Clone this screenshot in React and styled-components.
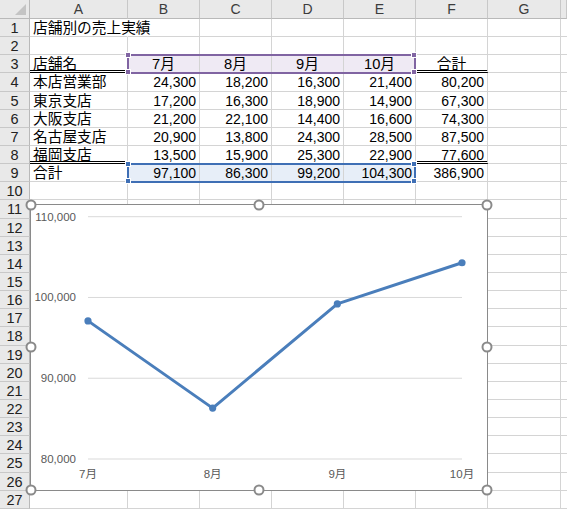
import React from 'react'
import styled, { createGlobalStyle } from 'styled-components'

const GlobalStyle = createGlobalStyle`
  * { box-sizing: border-box; margin: 0; padding: 0; }
  body {
    background: #ffffff;
    font-family: "Liberation Sans", "Noto Sans CJK JP", sans-serif;
    overflow: hidden;
  }
`

const ROW_H = 18.15
const HEAD_H = 19
const COLS = [30, 98, 72, 72, 72, 72, 72, 73, 6]
const LETTERS = ['A', 'B', 'C', 'D', 'E', 'F', 'G', '']

const data = [
  ['本店営業部', 24300, 18200, 16300, 21400, 80200],
  ['東京支店', 17200, 16300, 18900, 14900, 67300],
  ['大阪支店', 21200, 22100, 14400, 16600, 74300],
  ['名古屋支店', 20900, 13800, 24300, 28500, 87500],
  ['福岡支店', 13500, 15900, 25300, 22900, 77600],
]
const totals = ['合計', 97100, 86300, 99200, 104300, 386900]

const fmt = (n) => n.toLocaleString('en-US')

const Sheet = styled.div`
  display: grid;
  width: 567px;
  height: 510px;
  overflow: hidden;
  grid-template-columns: ${COLS.map((c) => c + 'px').join(' ')};
  grid-template-rows: ${HEAD_H}px repeat(27, ${ROW_H}px);
`

const Corner = styled.div`
  grid-row: 1;
  grid-column: 1;
  position: relative;
  background: #e9e9e9;
  border-right: 1px solid #b9b9b9;
  border-bottom: 1px solid #b9b9b9;
  &::after {
    content: '';
    position: absolute;
    right: 3px;
    bottom: 3px;
    border-left: 11px solid transparent;
    border-bottom: 11px solid #c4c4c4;
  }
`

const ColHead = styled.div`
  grid-row: 1;
  grid-column: ${(p) => p.$c};
  background: #e9e9e9;
  border-right: 1px solid #c8c8c8;
  border-bottom: 1px solid #b9b9b9;
  color: #3c3c3c;
  font-size: 14px;
  line-height: 18px;
  text-align: center;
`

const RowHead = styled.div`
  grid-row: ${(p) => p.$r};
  grid-column: 1;
  background: #e9e9e9;
  border-right: 1px solid #b9b9b9;
  border-bottom: 1px solid #c8c8c8;
  color: #222;
  font-size: 14.5px;
  line-height: 18px;
  text-align: center;
`

const Cell = styled.div`
  grid-row: ${(p) => p.$r};
  grid-column: ${(p) => p.$c};
  position: relative;
  background: ${(p) => p.$fill || 'transparent'};
  border-right: 1px solid ${(p) => (p.$spill ? 'transparent' : '#d4d4d4')};
  border-bottom: ${(p) => (p.$double ? '3px double #000' : '1px solid #d4d4d4')};
  color: #000;
  font-size: ${(p) => (p.$num ? '14px' : '14.7px')};
  line-height: 17px;
  padding: 1px 3px 0;
  white-space: nowrap;
  overflow: visible;
  text-align: ${(p) => p.$align || 'left'};
`

const Range = styled.div`
  grid-row: ${(p) => p.$r};
  grid-column: ${(p) => p.$c};
  position: relative;
  z-index: 2;
  margin: -1px 0 -1px -1px;
  border: 2px solid ${(p) => p.$color};
  pointer-events: none;
`

const Grip = styled.span`
  position: absolute;
  width: 6px;
  height: 6px;
  background: ${(p) => p.$color};
  border: 1px solid #ffffff;
  left: ${(p) => (p.$x ? 'calc(100% - 3px)' : '-4px')};
  top: ${(p) => (p.$y ? 'calc(100% - 3px)' : '-4px')};
`

const Chart = styled.div`
  grid-row: 12 / 28;
  grid-column: 2 / 8;
  position: relative;
  z-index: 3;
  margin-top: 3.5px;
  background: #ffffff;
  border: 1px solid #8a8a8a;
`

const Handle = styled.span`
  position: absolute;
  width: 11px;
  height: 11px;
  border-radius: 50%;
  background: #ffffff;
  border: 2px solid #8a8a8a;
  transform: translate(-50%, -50%);
`

const Plot = styled.svg`
  display: block;
  margin: -1px;
  overflow: visible;
`

function RangeBox({ r, color }) {
  return (
    <Range $r={r + 1} $c="3 / 7" $color={color}>
      <Grip $color={color} />
      <Grip $color={color} $x />
      <Grip $color={color} $y />
      <Grip $color={color} $x $y />
    </Range>
  )
}

function LineChart() {
  const vals = [97100, 86300, 99200, 104300]
  const labels = ['7月', '8月', '9月', '10月']
  const x0 = 58
  const x1 = 432
  const y = (v) => 12.7 + ((110000 - v) / 10000) * 80.77
  const xs = vals.map((_, i) => x0 + (i * (x1 - x0)) / 3)
  const ticks = [110000, 100000, 90000, 80000]
  const pts = vals.map((v, i) => `${xs[i]},${y(v)}`).join(' ')
  return (
    <Plot width="458" height="287">
      {ticks.map((t) => (
        <g key={t}>
          <line x1={x0} x2={x1} y1={y(t)} y2={y(t)} stroke="#d9d9d9" strokeWidth="1" />
          <text
            x="46"
            y={y(t) + 4}
            textAnchor="end"
            fontSize="11.5"
            fill="#595959"
            fontFamily='"Liberation Sans", sans-serif'
          >
            {fmt(t)}
          </text>
        </g>
      ))}
      {labels.map((l, i) => (
        <text
          key={l}
          x={xs[i]}
          y="274"
          textAnchor="middle"
          fontSize="11.5"
          fill="#595959"
          fontFamily='"Liberation Sans", "Noto Sans CJK JP", sans-serif'
        >
          {l}
        </text>
      ))}
      <polyline points={pts} fill="none" stroke="#4a7ebb" strokeWidth="3" strokeLinejoin="round" />
      {vals.map((v, i) => (
        <circle key={i} cx={xs[i]} cy={y(v)} r="3.6" fill="#4a7ebb" />
      ))}
    </Plot>
  )
}

function buildRows() {
  const rows = []
  for (let r = 1; r <= 27; r++) {
    const cells = Array(8).fill(null).map(() => ({ text: '' }))
    if (r === 1) cells[0] = { text: '店舗別の売上実績', spill: true }
    if (r === 3) {
      cells[0] = { text: '店舗名', double: true }
      ;['7月', '8月', '9月', '10月'].forEach((m, i) => {
        cells[i + 1] = { text: m, align: 'center', fill: '#efeaf4' }
      })
      cells[5] = { text: '合計', align: 'center', double: true }
    }
    if (r >= 4 && r <= 8) {
      const d = data[r - 4]
      cells[0] = { text: d[0], double: r === 8 }
      for (let i = 1; i <= 5; i++) {
        cells[i] = { text: fmt(d[i]), num: true, align: 'right', double: r === 8 && i === 5 }
      }
    }
    if (r === 9) {
      cells[0] = { text: totals[0] }
      for (let i = 1; i <= 5; i++) {
        cells[i] = { text: fmt(totals[i]), num: true, align: 'right', fill: i < 5 ? '#e7eef8' : undefined }
      }
    }
    rows.push(cells)
  }
  return rows
}

const HANDLES = [
  [0, 0], [50, 0], [100, 0],
  [0, 50], [100, 50],
  [0, 100], [50, 100], [100, 100],
]

export default function App() {
  const rows = buildRows()
  return (
    <Sheet>
      <GlobalStyle />
      <Corner />
      {LETTERS.map((l, i) => (
        <ColHead key={i} $c={i + 2}>{l}</ColHead>
      ))}
      {rows.map((cells, ri) => (
        <React.Fragment key={ri}>
          <RowHead $r={ri + 2}>{ri + 1}</RowHead>
          {cells.map((c, ci) => (
            <Cell
              key={ci}
              $r={ri + 2}
              $c={ci + 2}
              $align={c.align}
              $fill={c.fill}
              $double={c.double}
              $spill={c.spill}
              $num={c.num}
            >
              {c.text}
            </Cell>
          ))}
        </React.Fragment>
      ))}
      <RangeBox r={3} color="#8064a2" />
      <RangeBox r={9} color="#3f6fb5" />
      <Chart>
        <LineChart />
        {HANDLES.map(([x, y], i) => (
          <Handle key={i} style={{ left: `${x}%`, top: `${y}%` }} />
        ))}
      </Chart>
    </Sheet>
  )
}
